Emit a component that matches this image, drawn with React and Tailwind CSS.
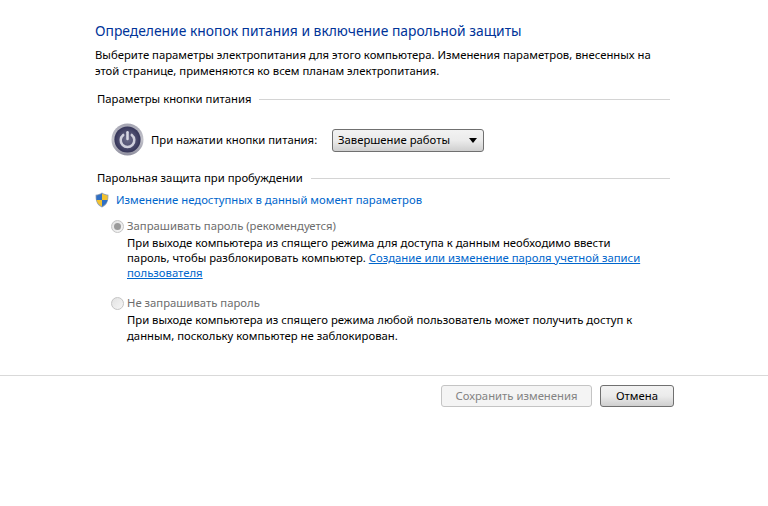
import React from 'react';

function PowerIcon() {
  return (
    <svg width="33" height="33" viewBox="0 0 34 34" className="shrink-0">
      <defs>
        <linearGradient id="ring" x1="0" y1="0" x2="0" y2="1">
          <stop offset="0%" stopColor="#a4a4b2" />
          <stop offset="50%" stopColor="#c4c4cc" />
          <stop offset="100%" stopColor="#8e8e9e" />
        </linearGradient>
        <radialGradient id="face" cx="50%" cy="50%" r="55%">
          <stop offset="0%" stopColor="#6a6a88" />
          <stop offset="60%" stopColor="#4a4a6c" />
          <stop offset="100%" stopColor="#2e2e52" />
        </radialGradient>
      </defs>
      <circle cx="17" cy="17" r="16.5" fill="url(#ring)" />
      <circle cx="17" cy="17" r="13.5" fill="url(#face)" />
      <path d="M12.600 12.300a7 7 0 1 0 8.800 0" fill="none" stroke="#cfcfdc" strokeWidth="2.600" strokeLinecap="round" />
      <path d="M17 9.500v7" fill="none" stroke="#d8d8e4" strokeWidth="2.600" strokeLinecap="round" />
    </svg>
  );
}

function ShieldIcon() {
  return (
    <svg width="14" height="16" viewBox="0 0 14 16" className="shrink-0">
      <path d="M7 .5C5 2 3 2.600.6 2.700c0 5 .2 9.600 6.400 12.800C13.200 12.300 13.400 7.700 13.400 2.700 11 2.600 9 2 7 .5z" fill="#8f9fb5" />
      <path d="M7 1.600V8H1.500C1.400 6.500 1.400 5 1.400 3.500 3.400 3.300 5.300 2.800 7 1.600z" fill="#2f6fc4" />
      <path d="M7 1.600V8h5.500c.1-1.500.1-3 .1-4.500C10.600 3.300 8.700 2.800 7 1.600z" fill="#f2c230" />
      <path d="M7 8v6.500C3.600 12.600 2 10.500 1.500 8H7z" fill="#f2c230" />
      <path d="M7 8v6.500c3.400-1.900 5-4 5.500-6.500H7z" fill="#2f6fc4" />
    </svg>
  );
}

function Radio({ checked }) {
  return (
    <span className="flex h-[13px] w-[13px] shrink-0 items-center justify-center rounded-full border border-[#c4c4c4] bg-gradient-to-br from-[#e2e2e2] to-[#f6f6f6]">
      {checked && <span className="h-[7px] w-[7px] rounded-full bg-[#9a9a9a]" />}
    </span>
  );
}

function GroupHeader({ children }) {
  return (
    <div className="flex h-[16px] items-center gap-2 pl-[2px]">
      <span className="leading-[16px] text-black">{children}</span>
      <span className="h-px flex-1 bg-[#d4d4d4]" />
    </div>
  );
}

function RadioOption({ checked, label, descClass, children }) {
  return (
    <div className="pl-[16px]">
      <div className="flex h-[16px] items-center gap-[3px]">
        <Radio checked={checked} />
        <span className="leading-[16px] text-[#6d6d6d]">{label}</span>
      </div>
      <p className={`whitespace-nowrap pl-[16px] text-black ${descClass}`}>{children}</p>
    </div>
  );
}

export default function App() {
  return (
    <div className="h-[506px] w-[768px] overflow-hidden bg-white font-['Noto_Sans',sans-serif] text-[11.3px] text-black">
      <div className="w-[670px] pl-[95px] pt-[22px]">
        <h1 className="text-[13.85px] leading-[18px] text-[#003399]">
          Определение кнопок питания и включение парольной защиты
        </h1>
        <p className="mt-[7px] leading-[16px]">
          Выберите параметры электропитания для этого компьютера. Изменения параметров, внесенных на
          <br />
          этой странице, применяются ко всем планам электропитания.
        </p>

        <div className="mt-[12px]">
          <GroupHeader>Параметры кнопки питания</GroupHeader>
        </div>
        <div className="mt-[15px] flex h-[34px] items-center pl-[16px]">
          <PowerIcon />
          <span className="ml-[7px] mt-[1px] w-[181px] leading-[16px]">При нажатии кнопки питания:</span>
          <div className="mt-[2px] flex h-[23px] w-[152px] items-center justify-between rounded-[3px] border border-[#707070] bg-gradient-to-b from-[#f2f2f2] via-[#ebebeb] to-[#cfcfcf] pl-[5px] pr-[6px]">
            <span>Завершение работы</span>
            <span className="h-0 w-0 border-x-[4px] border-t-[5px] border-x-transparent border-t-black" />
          </div>
        </div>

        <div className="mt-[14px]">
          <GroupHeader>Парольная защита при пробуждении</GroupHeader>
        </div>
        <div className="mt-[6px] flex h-[16px] items-center gap-[7px] text-[#0066cc]">
          <ShieldIcon />
          <span>Изменение недоступных в данный момент параметров</span>
        </div>

        <div className="mt-[10px]">
          <RadioOption checked label="Запрашивать пароль (рекомендуется)" descClass="mt-[1px] leading-[15px]">
            При выходе компьютера из спящего режима для доступа к данным необходимо ввести
            <br />
            пароль, чтобы разблокировать компьютер.{' '}
            <span className="text-[#0066cc] underline">Создание или изменение пароля учетной записи</span>
            <br />
            <span className="text-[#0066cc] underline">пользователя</span>
          </RadioOption>
        </div>
        <div className="mt-[15px]">
          <RadioOption label="Не запрашивать пароль" descClass="mt-[0.5px] leading-[16px]">
            При выходе компьютера из спящего режима любой пользователь может получить доступ к
            <br />
            данным, поскольку компьютер не заблокирован.
          </RadioOption>
        </div>
      </div>

      <div className="mt-[31.5px] border-t border-[#d9d9d9]">
        <div className="flex justify-end gap-2 pr-[94px] pt-[9px]">
          <div className="flex h-[22px] w-[151px] items-center justify-center rounded-[3px] border border-[#c4c4c4] bg-[#f4f4f4] text-[#838383]">
            Сохранить изменения
          </div>
          <div className="flex h-[22px] w-[74px] items-center justify-center rounded-[3px] border border-[#707070] bg-gradient-to-b from-[#f2f2f2] via-[#ebebeb] to-[#cfcfcf]">
            Отмена
          </div>
        </div>
      </div>
    </div>
  );
}
